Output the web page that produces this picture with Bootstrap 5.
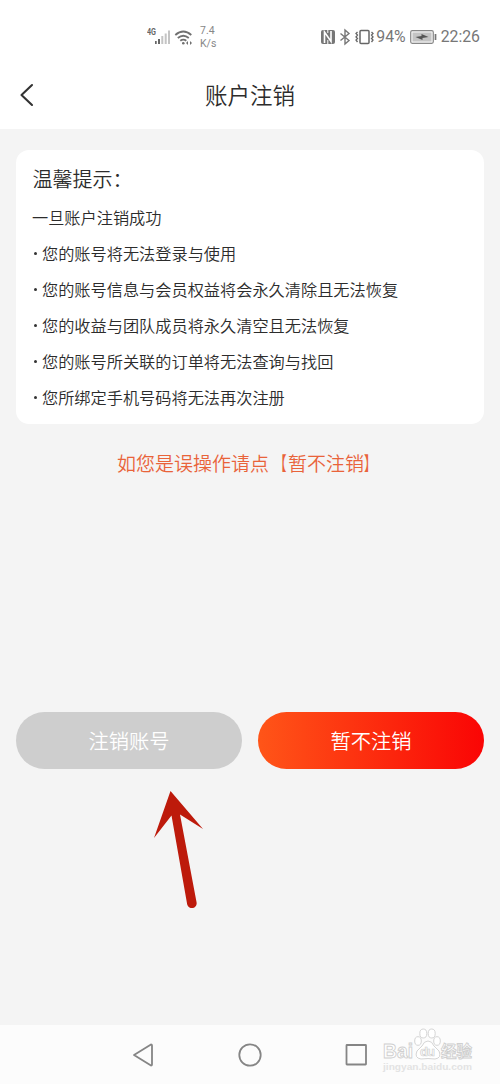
<!DOCTYPE html>
<html lang="zh-CN">
<head>
<meta charset="utf-8">
<meta name="viewport" content="width=device-width, initial-scale=1">
<title>账户注销</title>
<link href="https://cdn.jsdelivr.net/npm/bootstrap@5.3.0/dist/css/bootstrap.min.css" rel="stylesheet">
<style>
body{background:#f4f4f4;font-family:"Noto Sans","Noto Sans CJK SC",sans-serif;color:#2c2c2c;height:1084px;overflow:hidden}
.cjk{font-family:"Noto Sans CJK SC",sans-serif}
.status{height:62px;padding:12px 20px 0 147px;color:#777;font-family:Roboto,sans-serif}
.rate{font-size:10.5px;line-height:13px;margin-left:7px;color:#888}
.sys{font-size:15.8px;line-height:24px}
.titlebar{height:67px}
.titlebar h1{font-size:22.5px;line-height:32px}
.notice{margin:20.5px 16px 0;padding:12.5px 17px 0;height:274px;border-radius:13px}
.notice h2{font-size:20px;line-height:34px;margin-bottom:2.5px;text-indent:-.5px}
.notice p,.notice li{font-size:16.2px;line-height:36.1px}
.notice p{text-indent:-1px}
.notice li::before{content:"";display:inline-block;width:3px;height:3px;border-radius:50%;background:#333;vertical-align:5px;margin:0 5px 0 1px}
.cjk,.cjk h2,.btn{font-weight:350!important}
.warn{color:#e9633a;font-size:19px;line-height:30px;margin-top:24px}
.warn span{display:inline-block;transform:scaleX(.65)}
.warn .open{transform-origin:78% 50%}
.warn .close{transform-origin:0 50%}
.actions{margin-top:234px;padding:0 16px;gap:16px}
.actions .btn{height:57.5px;border:0;font-size:20.3px;color:#fff;padding:0}
.btn-off,.btn-off:hover{background:#cecece}
.btn-keep,.btn-keep:hover{background:linear-gradient(90deg,#ff5518,#fa0505)}
.pointer{margin:20.5px 0 0 152px}
.navkeys{height:59px;background:#fcfcfc}
.watermark{right:24px;bottom:6px}
</style>
</head>
<body class="d-flex flex-column position-relative">
<header class="bg-white">
  <div class="status d-flex align-items-center justify-content-between">
    <div class="d-flex align-items-center">
      <svg width="46" height="20" viewBox="0 0 46 20">
        <text x="0" y="8" font-size="8.5" font-weight="700" textLength="9" lengthAdjust="spacingAndGlyphs" fill="#666">4G</text>
        <g fill="#666"><path d="M8 14h1.7v3H8zM11 12h2v5h-2z"/><path fill="#c4c4c4" d="M14.3 9h2v8h-2zM17.7 6.500h2V17h-2zM21 3.500h2V17h-2z"/></g>
        <g fill="none" stroke="#707070" stroke-width="1.800"><path d="M28.300 8q8-7 16 0M30.800 11q5.500-4.600 11 0M33.300 13.800q3-2.400 6 0"/></g>
        <circle cx="36.300" cy="16.200" r="1.300" fill="#707070"/><path d="m43 14 2 2-2 2M41 14v4M41 14l-2 2 2 2" fill="#707070"/>
      </svg>
      <div class="rate">7.4<br>K/s</div>
    </div>
    <div class="sys d-flex align-items-center">
      <svg width="56" height="18" viewBox="0 0 56 18">
        <path d="M3 2h10q2 0 2 2v10q0 2-2 2H3q-2 0-2-2V4q0-2 2-2" fill="#777"/>
        <path d="M4.500 15V4l6.500 9.500V3" fill="none" stroke="#fff" stroke-width="1.600"/><path d="M7.800 1v4M7.800 12v5" stroke="#fff"/>
        <path d="m20.500 5.500 8.500 7-4 3.500V2l4 3.500-8.500 7" fill="none" stroke="#777" stroke-width="1.400"/>
        <rect x="40" y="2.500" width="9" height="13" rx="1" fill="none" stroke="#666" stroke-width="1.500"/>
        <path d="m37.500 4-1.500 1.500L37.500 7 36 9l1.500 1.500L36 12l1.500 2M51.500 4 53 5.500 51.500 7 53 9l-1.500 1.500L53 12l-1.500 2" fill="none" stroke="#666" stroke-width="1.300"/>
      </svg>
      <span>94%</span>
      <svg class="ms-1" width="27" height="14" viewBox="0 0 27 14">
        <rect x=".7" y=".7" width="22.600" height="12.600" rx="1.500" fill="#f5f5f5" stroke="#888" stroke-width="1.200"/>
        <path d="M2.500 2.500h19v9h-19z" fill="#c4c4c4"/><path d="m5.500 7 6-1V4L18.500 7l-6 1v2z" fill="#555"/><path d="M25.500 4v6" stroke="#777" stroke-width="1.700"/>
      </svg>
      <span class="ms-1">22:26</span>
    </div>
  </div>
  <div class="titlebar position-relative text-center">
    <svg class="position-absolute" style="left:18px;top:21px" width="16" height="24" viewBox="0 0 16 24"><path d="M14 2 3.500 12 14 22" fill="none" stroke="#333" stroke-width="2.100" stroke-linecap="round" stroke-linejoin="round"/></svg>
    <h1 class="cjk mb-0 pt-3">账户注销</h1>
  </div>
</header>
<main class="cjk flex-grow-1">
  <section class="notice bg-white">
    <h2>温馨提示：</h2>
    <p class="mb-0">一旦账户注销成功</p>
    <ul class="list-unstyled mb-0">
      <li>您的账号将无法登录与使用</li>
      <li>您的账号信息与会员权益将会永久清除且无法恢复</li>
      <li>您的收益与团队成员将永久清空且无法恢复</li>
      <li>您的账号所关联的订单将无法查询与找回</li>
      <li>您所绑定手机号码将无法再次注册</li>
    </ul>
  </section>
  <p class="warn text-center mb-0">如您是误操作请点<span class="open">【</span>暂不注销<span class="close">】</span></p>
  <div class="actions d-flex">
    <button class="btn btn-off rounded-pill flex-fill w-50">注销账号</button>
    <button class="btn btn-keep rounded-pill flex-fill w-50">暂不注销</button>
  </div>
  <svg class="pointer d-block" width="54" height="120" viewBox="0 0 54 120"><path d="M18.500 1 51 39 28 24.500 44.500 112a4.700 4.700 0 0 1-9.300 2.500L19.500 25.500 2 48z" fill="#bd1a0b"/></svg>
</main>
<footer class="navkeys position-relative">
  <svg class="d-block w-100" height="59" viewBox="0 0 500 59" fill="none" stroke="#858585" stroke-width="1.800" stroke-linejoin="round">
    <path d="M134 30 151 19.500q1 0 1 1V39.500q0 1-1 1z"/><circle cx="250" cy="30" r="10.700"/><rect x="346.500" y="20" width="19.500" height="19.500" rx=".5"/>
  </svg>
  <svg class="watermark position-absolute" width="96" height="50" viewBox="0 0 96 50" fill="#fff" stroke="#cfcfcf" stroke-width=".9">
    <text x="3" y="30" font-family="Liberation Sans" font-weight="700" font-size="20" textLength="30" lengthAdjust="spacingAndGlyphs">Bai</text>
    <g transform="translate(0 -7)">
      <ellipse cx="38" cy="20" rx="3.300" ry="4.300"/><ellipse cx="43.300" cy="12.500" rx="3.500" ry="4.500"/><ellipse cx="51.700" cy="12.500" rx="3.500" ry="4.500"/><ellipse cx="57" cy="20" rx="3.300" ry="4.300"/>
      <path d="M48 20q4 0 6 5l5 5q3 7-4 8-7-1-14 0-7-1-4-8l5-5q2-5 6-5z"/>
    </g>
    <text x="40" y="28" font-family="Liberation Sans" font-weight="700" font-size="13" textLength="15" stroke-width=".7">du</text>
    <text x="61" y="29" font-family="Noto Sans CJK SC" font-weight="700" font-size="15.500" textLength="31">经验</text>
    <text x="3" y="42" font-family="Liberation Sans" font-weight="700" font-size="9" textLength="89" lengthAdjust="spacingAndGlyphs" fill="#e3e3e3" stroke="none">jingyan.baidu.com</text>
  </svg>
</footer>
<script src="https://cdn.jsdelivr.net/npm/bootstrap@5.3.0/dist/js/bootstrap.bundle.min.js"></script>
</body>
</html>
